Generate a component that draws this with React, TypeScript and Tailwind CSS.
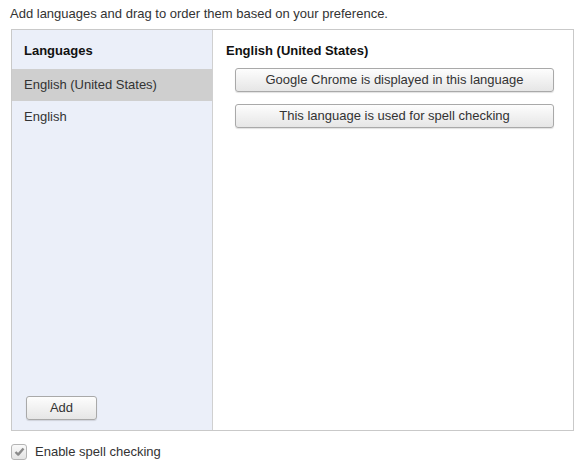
import React from "react";

function Button({ label, className }: { label: string; className?: string }) {
  return (
    <button
      className={`h-[24px] rounded-[3px] border border-[#a9a9a9] bg-gradient-to-b from-[#fdfdfd] to-[#e6e6e6] text-[13px] text-[#333] shadow-[0_1px_1px_rgba(0,0,0,0.12)] ${className ?? ""}`}
    >
      {label}
    </button>
  );
}

export default function App() {
  return (
    <div className="w-[584px] h-[475px] bg-white text-[13px] text-[#333] font-['Liberation_Sans',Arial,sans-serif]">
      <div className="pl-[10px] pt-[4px] h-[29px]">
        Add languages and drag to order them based on your preference.
      </div>

      {/* Language list + details */}
      <div className="ml-[11px] w-[563px] h-[402px] flex border border-[#c9c9c9]">
        <div className="w-[201px] flex flex-col bg-[#ebeff9] border-r border-[#d0d0d0]">
          <div className="h-[39px] pl-[12px] pt-[11px] font-bold text-[#111]">Languages</div>
          <div className="h-[32px] pl-[12px] flex items-center bg-[#cfcfcf]">English (United States)</div>
          <div className="h-[32px] pl-[12px] flex items-center">English</div>
          <div className="flex-1" />
          <div className="pl-[14px] pb-[10px]">
            <Button label="Add" className="w-[71px]" />
          </div>
        </div>

        <div className="flex-1 flex flex-col pl-[13px]">
          <div className="h-[38px] pt-[11px] font-bold text-[#111]">English (United States)</div>
          <div className="pl-[9px] flex flex-col gap-[12px]">
            <Button label="Google Chrome is displayed in this language" className="w-[319px]" />
            <Button label="This language is used for spell checking" className="w-[319px]" />
          </div>
        </div>
      </div>

      <label className="flex items-center gap-[8px] pl-[11px] pt-[11px]">
        <span className="w-[16px] h-[16px] rounded-[3px] border border-[#b5b5b5] bg-gradient-to-b from-[#fafafa] to-[#e4e4e4] flex items-center justify-center">
          <svg width="11" height="11" viewBox="0 0 11 11">
            <path d="M1.5 6 L4.2 8.6 L9.5 2.5" fill="none" stroke="#8a8a8a" strokeWidth="2.4" strokeLinejoin="round" />
          </svg>
        </span>
        <span>Enable spell checking</span>
      </label>
    </div>
  );
}
